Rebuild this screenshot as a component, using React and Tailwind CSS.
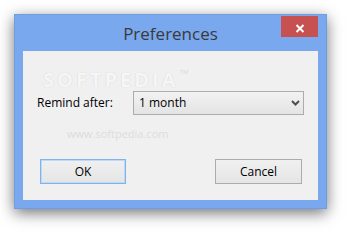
import React, { useState } from 'react';

const font = { fontFamily: '"Segoe UI", "Open Sans", "Noto Sans", sans-serif' };

const Chevron = () => (
  <svg width="9" height="6" viewBox="0 0 9 6" fill="none">
    <path d="M1 1l3.5 3.5L8 1" stroke="#4d4d4d" strokeWidth="2" />
  </svg>
);

const CloseIcon = () => (
  <svg width="10" height="9" viewBox="0 0 10 9" fill="none">
    <path d="M1.5 1l7 7M8.5 1l-7 7" stroke="#ffffff" strokeWidth="2" />
  </svg>
);

const Preferences = () => {
  const [period] = useState('1 month');

  return (
    <div className="w-[350px] h-[233px] bg-white pt-[14px] pl-[14px]" style={font}>
      <div className="w-[313px] h-[195px] bg-[#79a8ee] border border-[#6c9de6] px-[8px] pb-[8px] flex flex-col shadow-[0_4px_14px_rgba(0,0,0,0.55)]">
        <div className="relative h-[36px] flex items-center justify-center">
          <span className="text-[17px] text-[#3a3a3a] leading-none">Preferences</span>
          <button
            type="button"
            className="absolute top-[1px] right-0 w-[37px] h-[21px] bg-[#c75050] flex items-center justify-center pt-[3px]"
          >
            <CloseIcon />
          </button>
        </div>

        <div className="relative flex-1 bg-[#f0f0f0] flex flex-col">
          {/* softpedia watermark */}
          <div className="pointer-events-none absolute left-[20px] top-[22px] h-[14px] text-[20px] font-bold tracking-[3px] text-[#f6f6f6] [text-shadow:0_0_1px_#c8c8c8] leading-[14px]">
            SOFTPEDIA
            <span className="absolute -right-[10px] -top-[4px] text-[6px] leading-none font-normal tracking-normal text-[#dadada] [text-shadow:none]">TM</span>
          </div>
          <div className="pointer-events-none absolute left-[44px] top-[77px] text-[11px] text-[#dcdcdc] leading-none">
            www.softpedia.com
          </div>

          <div className="relative mt-[40px] px-[14px] flex items-center justify-between">
            <span className="text-[12px] leading-none text-black">Remind after:</span>
            <div className="w-[171px] h-[24px] border border-[#acacac] bg-gradient-to-b from-[#f2f2f2] to-[#e4e4e4] flex items-center justify-between pl-[5px] pr-[3px]">
              <span className="text-[12px] text-black">{period}</span>
              <Chevron />
            </div>
          </div>

          <div className="relative mt-[44px] pl-[17px] pr-[16px] flex justify-between">
            <button
              type="button"
              className="w-[86px] h-[25px] border border-[#7eb4ea] bg-gradient-to-b from-[#f0f0f0] to-[#e5e5e5] shadow-[inset_0_0_0_1px_#bcdaf5] text-[12px] text-black"
            >
              OK
            </button>
            <button
              type="button"
              className="w-[87px] h-[25px] border border-[#acacac] bg-gradient-to-b from-[#f0f0f0] to-[#e5e5e5] text-[12px] text-black"
            >
              Cancel
            </button>
          </div>
        </div>
      </div>
    </div>
  );
};

export default Preferences;
